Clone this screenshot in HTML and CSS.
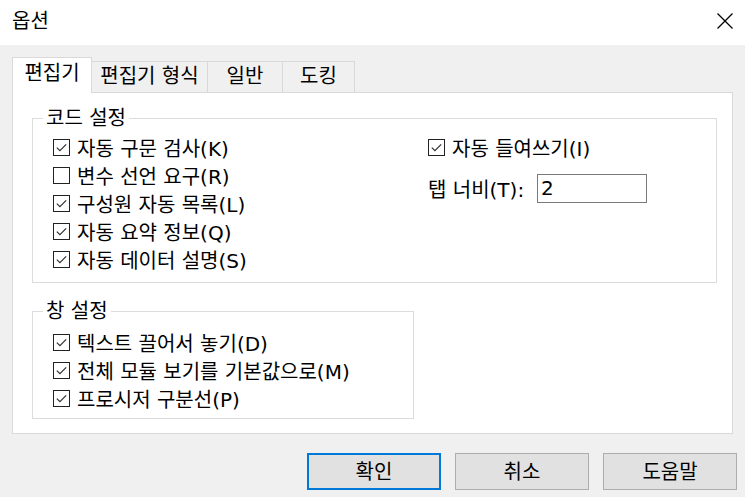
FILE: index.html
```html
<!DOCTYPE html>
<html lang="ko">
<head>
<meta charset="utf-8">
<title>옵션</title>
<link rel="stylesheet" href="styles.css">
</head>
<body>
<div class="window">
  <header class="titlebar">
    <span class="title">옵션</span>
    <svg class="close" width="16" height="16" viewBox="0 0 16 16"><path d="M0.5 0.5 L15.5 15.5 M15.5 0.5 L0.5 15.5" stroke="#000" stroke-width="1.3" fill="none"/></svg>
  </header>
  <main class="client">
    <div class="tabs">
      <div class="tab active w1">편집기</div>
      <div class="tab w2">편집기 형식</div>
      <div class="tab w3">일반</div>
      <div class="tab w4">도킹</div>
    </div>
    <div class="panel">
      <fieldset class="group code">
        <legend>코드 설정</legend>
        <div class="cols">
          <div class="col left">
            <label class="chk"><span class="box on"><svg viewBox="0 0 16 16"><path d="M3 8.2 L6.3 11.4 L13 4.6" /></svg></span>자동 구문 검사(K)</label>
            <label class="chk"><span class="box"></span>변수 선언 요구(R)</label>
            <label class="chk"><span class="box on"><svg viewBox="0 0 16 16"><path d="M3 8.2 L6.3 11.4 L13 4.6" /></svg></span>구성원 자동 목록(L)</label>
            <label class="chk"><span class="box on"><svg viewBox="0 0 16 16"><path d="M3 8.2 L6.3 11.4 L13 4.6" /></svg></span>자동 요약 정보(Q)</label>
            <label class="chk"><span class="box on"><svg viewBox="0 0 16 16"><path d="M3 8.2 L6.3 11.4 L13 4.6" /></svg></span>자동 데이터 설명(S)</label>
          </div>
          <div class="col right">
            <label class="chk"><span class="box on"><svg viewBox="0 0 16 16"><path d="M3 8.2 L6.3 11.4 L13 4.6" /></svg></span>자동 들여쓰기(I)</label>
            <div class="field">
              <span class="field-label">탭 너비(T):</span>
              <span class="input">2</span>
            </div>
          </div>
        </div>
      </fieldset>
      <fieldset class="group win">
        <legend>창 설정</legend>
        <label class="chk"><span class="box on"><svg viewBox="0 0 16 16"><path d="M3 8.2 L6.3 11.4 L13 4.6" /></svg></span>텍스트 끌어서 놓기(D)</label>
        <label class="chk"><span class="box on"><svg viewBox="0 0 16 16"><path d="M3 8.2 L6.3 11.4 L13 4.6" /></svg></span>전체 모듈 보기를 기본값으로(M)</label>
        <label class="chk"><span class="box on"><svg viewBox="0 0 16 16"><path d="M3 8.2 L6.3 11.4 L13 4.6" /></svg></span>프로시저 구분선(P)</label>
      </fieldset>
    </div>
    <div class="buttons">
      <button class="btn default">확인</button>
      <button class="btn">취소</button>
      <button class="btn">도움말</button>
    </div>
  </main>
</div>
</body>
</html>
```

FILE: styles.css
```css
* { box-sizing: border-box; }
html, body { margin: 0; padding: 0; }
body {
  width: 745px;
  height: 497px;
  overflow: hidden;
  background: #f0f0f0;
  font-family: "DejaVu Sans", "Noto Sans CJK KR", sans-serif;
  font-size: 20px;
  color: #000;
}
.window { width: 745px; height: 497px; background: #f0f0f0; }
.titlebar {
  height: 45px;
  background: #fff;
  display: flex;
  align-items: center;
  justify-content: space-between;
  padding: 0 12px 0 12px;
}
.title { line-height: 20px; padding-bottom: 4px; }
.close { display: block; margin-bottom: 4px; }
.client { padding: 12px 12px 0 12px; }
.tabs {
  display: flex;
  align-items: flex-end;
  height: 35px;
}
.tab {
  height: 31px;
  border: 1px solid #d9d9d9;
  border-left: 0;
  border-bottom: 0;
  background: #f0f0f0;
  display: flex;
  align-items: center;
  justify-content: center;
  line-height: 20px;
  padding-bottom: 2px;
}
.tab.active {
  height: 36px;
  border-left: 1px solid #d9d9d9;
  background: #fff;
  margin-bottom: -1px;
  position: relative;
  z-index: 1;
  padding-bottom: 5px;
}
.w1 { width: 80px; }
.w2 { width: 116px; }
.w3 { width: 75px; }
.w4 { width: 72px; }
.panel {
  height: 342px;
  background: #fff;
  border: 1px solid #d9d9d9;
  padding: 15px 16px 0 19px;
}
.group {
  margin: 0;
  border: 1px solid #dcdcdc;
  padding: 5px 0 9px 20px;
  min-width: 0;
}
.group legend {
  line-height: 20px;
  padding: 0 3px;
  margin-left: -10px;
}
.code { width: 685px; }
.win { width: 382px; margin-top: 18px; padding-top: 7px; padding-bottom: 6px; }
.cols { display: flex; }
.col.left { width: 375px; }
.col { display: flex; flex-direction: column; }
.chk {
  display: flex;
  align-items: center;
  height: 28px;
  white-space: nowrap;
}
.box {
  width: 17px;
  height: 17px;
  border: 1px solid #222;
  background: #fff;
  margin-right: 7px;
  flex: none;
  display: flex;
}
.box svg { width: 15px; height: 15px; }
.box svg path { fill: none; stroke: #333; stroke-width: 1.3; }
.field {
  display: flex;
  align-items: center;
  margin-top: 13px;
  height: 29px;
}
.field-label { width: 109px; }
.input {
  width: 110px;
  height: 29px;
  border: 1px solid #7a7a7a;
  background: #fff;
  line-height: 26px;
  padding-left: 3px;
}
.buttons {
  display: flex;
  justify-content: flex-end;
  gap: 14px;
  margin-top: 19px;
  margin-right: -4px;
}
.btn {
  width: 134px;
  height: 37px;
  border: 1px solid #adadad;
  background: #e1e1e1;
  font: inherit;
  color: #000;
  padding: 0 0 2px 0;
  margin: 0;
}
.btn.default { border: 2px solid #0078d7; }
```
